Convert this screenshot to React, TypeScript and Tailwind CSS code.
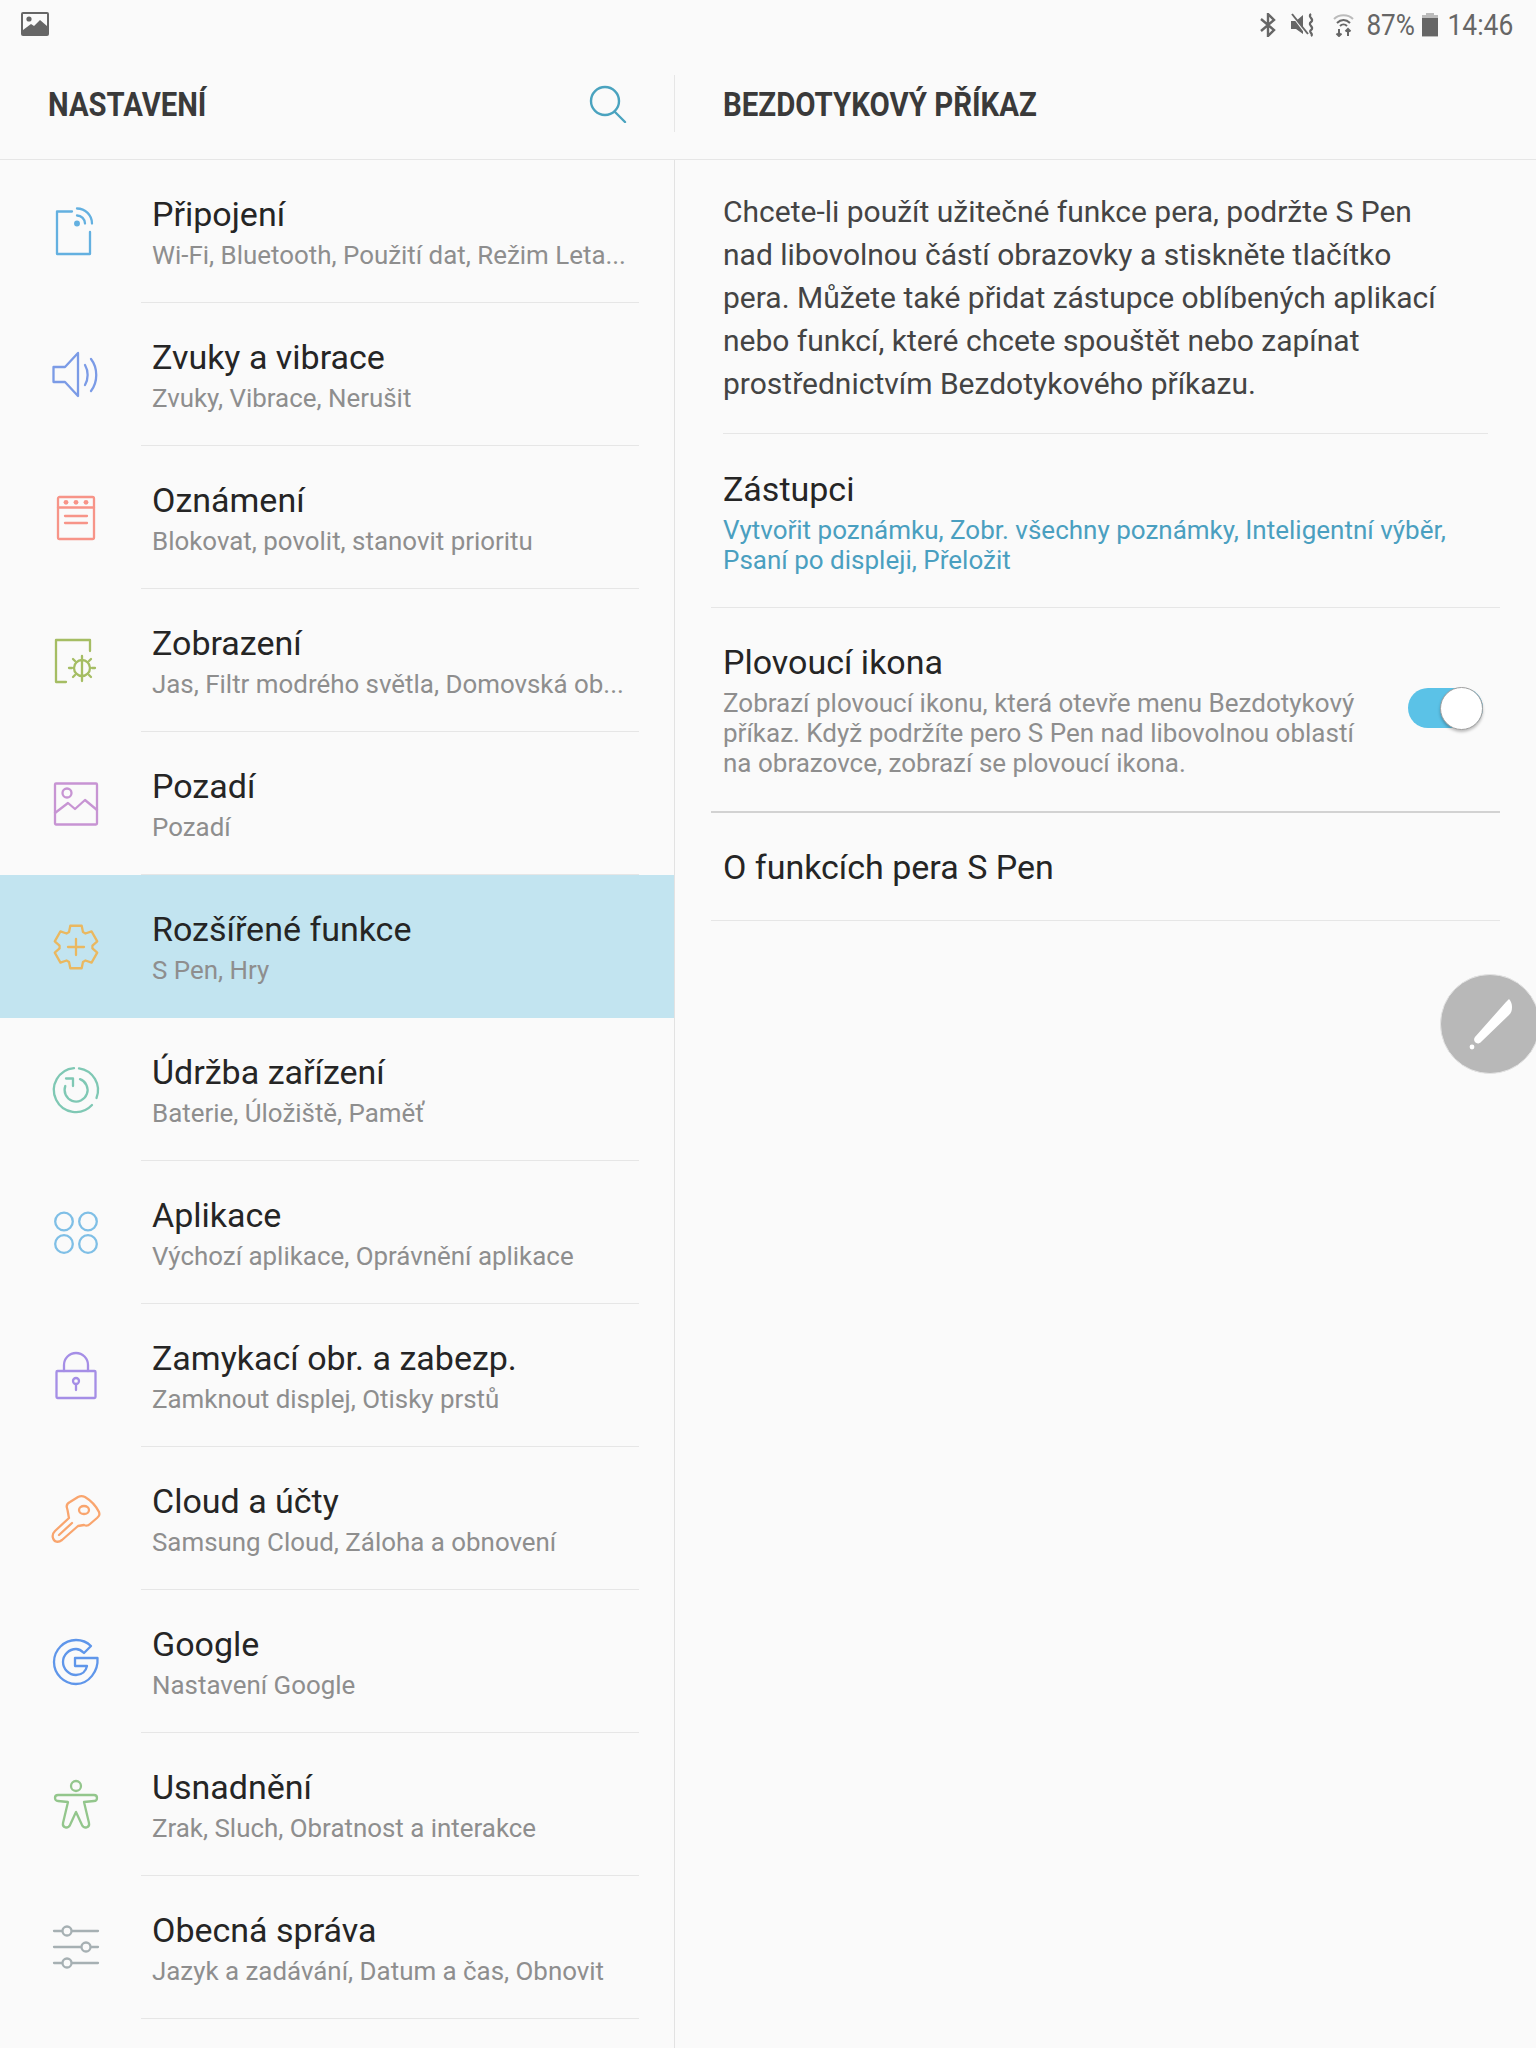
import React from "react";

const S = ({ c, children }: { c: string; children: React.ReactNode }) => (
  <svg width="48" height="48" viewBox="0 0 48 48" fill="none" stroke={c} strokeWidth="2.3" strokeLinecap="round" strokeLinejoin="round" className="overflow-visible">
    {children}
  </svg>
);

function gearPath() {
  const pts: string[] = [];
  const r = (R: number, d: number) => {
    const a = (d * Math.PI) / 180;
    return `${(24 + R * Math.cos(a)).toFixed(2)} ${(24 + R * Math.sin(a)).toFixed(2)}`;
  };
  for (let k = 0; k < 6; k++) {
    const a = -90 + k * 60;
    pts.push(r(16.5, a - 25), r(22, a - 15), r(22, a + 15), r(16.5, a + 25));
  }
  return "M" + pts.join(" L") + " Z";
}

const icons: React.ReactNode[] = [
  <S c="#63b0e0" key="a"><path d="M20 3.500 H5 V46 H38 V24" /><circle cx="25" cy="15.500" r="1.800" fill="#63b0e0" /><path d="M25 7.500 A8 8 0 0 1 33 15.500" /><path d="M25 0.500 A15 15 0 0 1 40 15.500" /></S>,
  <S c="#7b9be6" key="b"><path d="M1.500 16 V31 H13 L26 45 V2 L13 16 Z" /><path d="M33 14 C36.500 20 36.500 28 33 34" /><path d="M39 8 C46 17 46 31 39 40" /></S>,
  <S c="#f79488" key="c"><rect x="6" y="3" width="36" height="42" rx="1.500" /><path d="M6 13.500 H42" /><circle cx="14" cy="8.300" r="2.400" fill="#f79488" stroke="none" /><circle cx="24" cy="8.300" r="2.400" fill="#f79488" stroke="none" /><circle cx="34" cy="8.300" r="2.400" fill="#f79488" stroke="none" /><path d="M13 22 H35" /><path d="M13 29 H35" /></S>,
  <S c="#a5bd63" key="d"><path d="M14 45 H4 V3 H38 V14" /><circle cx="30" cy="31" r="8" /><path d="M30 19 V44 M17 31 H20 M40 31 H43 M21 22 L23 24 M39 22 L37 24 M21 40 L23 38 M39 40 L37 38" /></S>,
  <S c="#c794d3" key="e"><rect x="3" y="3.500" width="42" height="41" rx="1" /><circle cx="15" cy="13" r="4.500" /><path d="M3 33 L16 23 L23 29 L33 20 L45 30" /></S>,
  <S c="#eab860" key="f"><path d={gearPath()} /><path d="M24 16 V32 M16 24 H32" /></S>,
  <S c="#7fc8b4" key="g"><path d="M27 2.300 A22 22 0 0 1 44.500 32" /><path d="M40 39 A22 22 0 1 1 22 2.100" /><path d="M28 13.200 A11.500 11.500 0 1 1 13.300 20" /><path d="M14 12.500 H21 V20" /></S>,
  <S c="#7fbfe6" key="h"><circle cx="12" cy="12.500" r="8.800" /><circle cx="36" cy="12.500" r="8.800" /><circle cx="12" cy="35" r="8.800" /><circle cx="36" cy="35" r="8.800" /></S>,
  <S c="#a58ee6" key="i"><path d="M12 19 V13 A12 12 0 0 1 36 13 V19" /><rect x="4.500" y="19" width="39" height="27" rx="1" /><circle cx="24" cy="29" r="3" /><path d="M24 32 V38" /></S>,
  <S c="#f9a56e" key="j"><path d="M15 13 C14 10 16 8 18 7 L26 2 C29 0.500 31 1 33 2 C38 5 44 11 47 17 C48 20 47 21 45 23 L38 29 C36 31 34 31 32 30 L26 31 L10 45 C6 48 2 47 1 43 C0 40 1 38 3 36 L17 23 C16 19 16 16 15 13 Z" /><path d="M7 40 L20 28" /><ellipse cx="32" cy="15" rx="5" ry="4" /></S>,
  <S c="#5f96ea" key="k"><path d="M23 20 H45.500 C46.500 33 37 46 24 46 C12 46 2 36 2 24 C2 12 12 2 24 2 C30 2 35 4 39 8 L32 15 C30 13 27 11 24 11 C17 11 11 17 11 24 C11 31 17 37 24 37 C30 37 34 33 35 28 H23 Z" /></S>,
  <S c="#93c68c" key="l"><circle cx="24" cy="5" r="5" /><path d="M6 14 H42 C46 14 46 20 42 20 L32 21 L37 42 C38 47 32 48 30 44 L24 31 L18 44 C16 48 10 47 11 42 L16 21 L6 20 C2 20 2 14 6 14 Z" /></S>,
  <S c="#a6b0b3" key="m"><path d="M2 7 H46 M2 23 H46 M2 39 H46" /><circle cx="15" cy="7" r="4.500" fill="#fafafa" /><circle cx="34" cy="23" r="4.500" fill="#fafafa" /><circle cx="15" cy="39" r="4.500" fill="#fafafa" /></S>,
];

const rows = [
  ["Připojení", "Wi-Fi, Bluetooth, Použití dat, Režim Leta..."],
  ["Zvuky a vibrace", "Zvuky, Vibrace, Nerušit"],
  ["Oznámení", "Blokovat, povolit, stanovit prioritu"],
  ["Zobrazení", "Jas, Filtr modrého světla, Domovská ob..."],
  ["Pozadí", "Pozadí"],
  ["Rozšířené funkce", "S Pen, Hry"],
  ["Údržba zařízení", "Baterie, Úložiště, Paměť"],
  ["Aplikace", "Výchozí aplikace, Oprávnění aplikace"],
  ["Zamykací obr. a zabezp.", "Zamknout displej, Otisky prstů"],
  ["Cloud a účty", "Samsung Cloud, Záloha a obnovení"],
  ["Google", "Nastavení Google"],
  ["Usnadnění", "Zrak, Sluch, Obratnost a interakce"],
  ["Obecná správa", "Jazyk a zadávání, Datum a čas, Obnovit"],
];

export default function App() {
  return (
    <div className="relative w-[1536px] h-[2048px] overflow-hidden bg-[#fafafa] font-['Roboto',sans-serif] flex flex-col">
      {/* status bar */}
      <div className="h-[48px] shrink-0 flex items-center justify-between pl-[21px] pr-[23px] text-[#666666]">
        <svg width="28" height="24" viewBox="0 0 28 24">
          <rect width="28" height="24" rx="2" fill="#666" />
          <rect x="2" y="2" width="24" height="16" fill="#fafafa" />
          <circle cx="8" cy="7" r="2.600" fill="#666" />
          <path d="M2 18 L10 12 L13 14 L19 8 L26 14 V19 H2 Z" fill="#666" />
        </svg>
        <div className="flex items-center pt-[2px]">
          <svg width="16" height="24" viewBox="0 0 16 24" fill="none" stroke="#666" strokeWidth="2.400"><path d="M1 6 L14 17 L8 23 V1 L14 7 L1 18" /></svg>
          <svg width="25" height="24" viewBox="0 0 25 24" className="ml-[15px]" fill="#666">
            <path d="M0 8 H5 L12 2 V21 L5 16 H0 Z" />
            <path d="M1 2 L16 22" stroke="#fafafa" strokeWidth="2" />
            <path d="M1 1 L17 21" stroke="#666" strokeWidth="2" />
            <path d="M20 1 C16 4 24 6 20 9 C16 12 24 14 20 17 C17 19 23 21 20 23" fill="none" stroke="#666" strokeWidth="2.200" />
          </svg>
          <svg width="21" height="24" viewBox="0 0 21 24" className="ml-[17px]" fill="none" stroke="#666" strokeWidth="2">
            <path d="M1 6 C6 1 15 1 20 6" stroke="#bbb" />
            <path d="M4 10 C8 6 13 6 17 10" />
            <path d="M7 13 C9 11 12 11 14 13" />
            <path d="M6 16 V23 M3.500 20.500 L6 23 L8.500 20.500 M15 23 V16 M12.500 18.500 L15 16 L17.500 18.500" />
          </svg>
          <span className="ml-[7px] text-[29px] leading-none inline-block origin-right scale-x-[0.9]">87%</span>
          <svg width="16" height="24" viewBox="0 0 16 24" className="ml-[7px]"><rect x="4" y="0" width="8" height="3" fill="#bbb" /><rect y="2" width="16" height="22" fill="#bbb" /><rect y="5" width="16" height="18" fill="#666" /></svg>
          <span className="ml-[3px] text-[29px] leading-none inline-block origin-right scale-x-[0.91]">14:46</span>
        </div>
      </div>

      {/* header */}
      <div className="h-[112px] shrink-0 flex items-center border-b border-[#e6e6e6]">
        <div className="w-[675px] h-[57px] shrink-0 flex items-center justify-between pl-[48px] pr-[47px] border-r border-[#e6e6e6]">
          <span className="pt-[2px] text-[34px] font-bold text-[#3a3a3a] inline-block origin-left scale-x-[0.86]">NASTAVENÍ</span>
          <svg width="38" height="38" viewBox="0 0 38 38" fill="none" stroke="#4aa3bf" strokeWidth="2.400" strokeLinecap="round" className="ml-[1px]"><circle cx="16" cy="16" r="14" /><path d="M26 27 L36 37" /></svg>
        </div>
        <span className="ml-[48px] pt-[2px] text-[34px] font-bold text-[#3a3a3a] inline-block origin-left scale-x-[0.865] whitespace-nowrap">BEZDOTYKOVÝ PŘÍKAZ</span>
      </div>

      {/* body */}
      <div className="flex flex-1 min-h-0">
        <div className="w-[675px] shrink-0 border-r border-[#e2e2e2]">
          {rows.map(([t, s], i) => (
            <div key={t} className={`h-[143px] flex ${i === 5 ? "bg-[#c2e4f0]" : ""}`}>
              <div className="w-[141px] shrink-0 flex items-center pl-[52px]">{icons[i]}</div>
              <div className={`w-[498px] pl-[11px] pt-[34px] ${i === 5 ? "" : "border-b border-[#e6e6e6]"}`}>
                <div className="text-[34px] leading-[40px] text-[#252525] whitespace-nowrap">{t}</div>
                <div className="mt-[5px] text-[25.900px] leading-[32px] text-[#8e8e8e] whitespace-nowrap">{s}</div>
              </div>
            </div>
          ))}
        </div>

        <div className="pl-[36px] w-[825px]">
          <div className="mx-[12px] pt-[30px] pb-[28px] pr-[40px] border-b border-[#e6e6e6] text-[30px] leading-[43px] text-[#444444]">
            Chcete-li použít užitečné funkce pera, podržte S Pen nad libovolnou částí obrazovky a stiskněte tlačítko pera. Můžete také přidat zástupce oblíbených aplikací nebo funkcí, které chcete spouštět nebo zapínat prostřednictvím Bezdotykového příkazu.
          </div>
          <div className="px-[12px] pt-[35px] pb-[32px] border-b border-[#e6e6e6]">
            <div className="text-[34px] leading-[40px] text-[#252525]">Zástupci</div>
            <div className="mt-[6px] text-[26px] leading-[30px] text-[#4a9fc0]">Vytvořit poznámku, Zobr. všechny poznámky, Inteligentní výběr, Psaní po displeji, Přeložit</div>
          </div>
          <div className="px-[12px] pt-[34px] pb-[33px] border-b-2 border-[#d2d2d2] flex items-center">
            <div className="w-[660px]">
              <div className="text-[34px] leading-[40px] text-[#252525]">Plovoucí ikona</div>
              <div className="mt-[6px] text-[26px] leading-[30px] text-[#8e8e8e]">Zobrazí plovoucí ikonu, která otevře menu Bezdotykový příkaz. Když podržíte pero S Pen nad libovolnou oblastí na obrazovce, zobrazí se plovoucí ikona.</div>
            </div>
            <div className="ml-[25px] mb-[4px] w-[75px] h-[40px] rounded-full bg-[#5bc2e7] flex items-center justify-end">
              <div className="w-[43px] h-[43px] shrink-0 rounded-full bg-white border border-[#a0a0a0] shadow-[0_2px_3px_rgba(0,0,0,0.25)]" />
            </div>
          </div>
          <div className="h-[108px] px-[12px] pt-[2px] flex items-center border-b border-[#e6e6e6] text-[34px] text-[#252525]">O funkcích pera S Pen</div>
        </div>
      </div>

      {/* floating pen */}
      <div className="absolute left-[1440px] top-[974px] w-[100px] h-[100px] rounded-full bg-[#b8b8b8] border border-[#e4e4e4]">
        <svg width="98" height="98" viewBox="0 0 98 98" fill="#fff">
          <path d="M34 62 L65 27 L68 24 C70 26 71 29 71 32 C71 36 70 38 68 40 L40 67 C36 71 31 66 34 62 Z" />
          <circle cx="31" cy="72" r="2.400" />
        </svg>
      </div>
    </div>
  );
}
